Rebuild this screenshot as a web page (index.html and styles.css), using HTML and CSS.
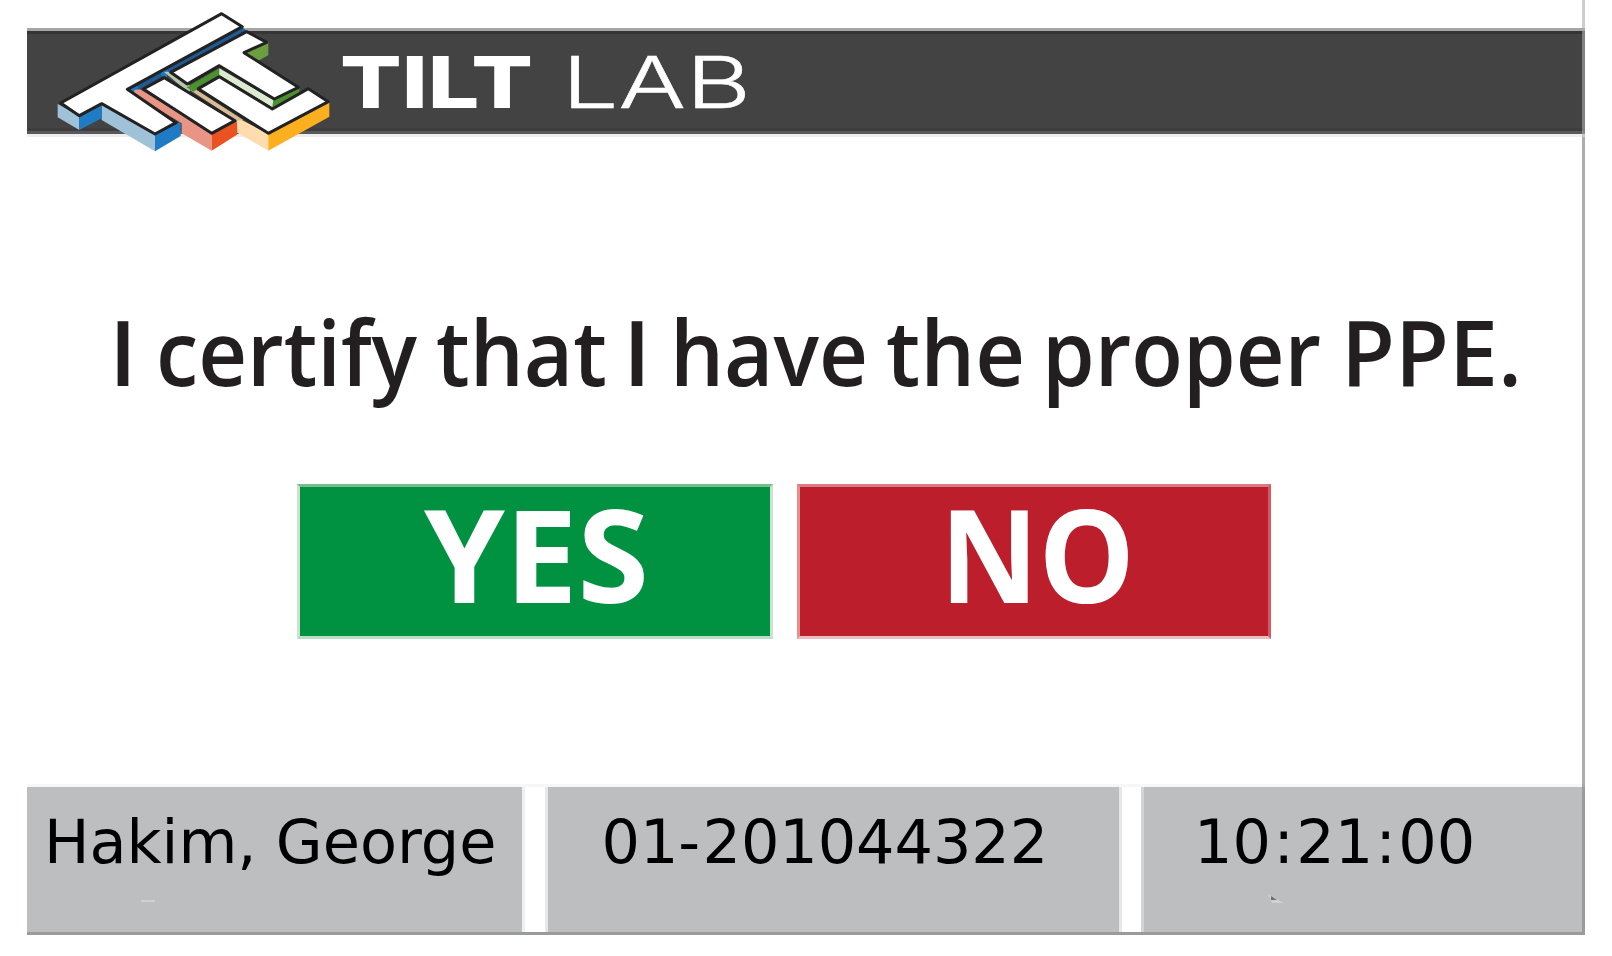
FILE: index.html
```html
<!DOCTYPE html>
<html lang="en">
<head>
<meta charset="utf-8">
<title>Tilt Lab</title>
<link rel="stylesheet" href="styles.css">
</head>
<body>
<div class="screen">
  <header class="header">
    <svg class="brand" width="760" height="160" viewBox="0 0 760 160">
      <g class="mark" transform="translate(13 0) scale(.33333)">
        <path fill="#9fc2d9" d="M53 312L118 348V390L53 352ZM185 310L345 402V454L185 360Z"/>
        <path fill="#1f7bc4" d="M118 348L185 312V355L118 390ZM345 402L422 366V408L345 454Z"/>
        <path fill="#1d5c96" d="M605 80L622 95L385 218L290 272L300 285L260 268Z"/>
        <path fill="#1f7bc4" d="M360 215L385 210L380 232L366 228ZM266 268L295 258L290 282Z"/>
        <path fill="#e99585" d="M284 270L300 268L515 400V452L425 400V370L280 282Z"/>
        <path fill="#ea5321" d="M515 402L591 362V404L515 452Z"/>
        <path fill="#b5c7ad" d="M372 216L390 215L455 260L447 278Z"/>
        <path fill="#ffdcae" d="M590 352L685 402V452L592 398Z"/>
        <path fill="#d8bd94" d="M450 270L470 270L610 360L590 362Z"/>
        <path fill="#fcaf1f" d="M685 402L868 306V350L685 452Z"/>
        <path fill="#6b9d41" d="M612 158L685 125V166L655 182Z"/>
        <path fill="#4c9130" d="M440 262L538 205L545 225L460 275ZM697 300L778 262V280L697 325Z"/>
        <path fill="#dcebcf" d="M538 205L700 300L697 322L538 225Z"/>
        <g class="faces">
          <path d="M62 309L545 41L607 80L262 268L408 368L345 402L185 311L118 347Z"/>
          <path d="M310 267L373 233L585 362L515 400Z"/>
          <path d="M392 217L620 95L680 127L612 158L775 262L703 297L538 197L442 252Z"/>
          <path d="M475 266L538 230L697 327L805 266L865 305L685 400Z"/>
        </g>
      </g>
      <text class="brand-bold" x="313" y="107.500" textLength="193" lengthAdjust="spacingAndGlyphs">TILT</text>
      <text class="brand-thin" y="107.500"><tspan x="535" textLength="189" lengthAdjust="spacingAndGlyphs">LAB</tspan></text>
    </svg>
  </header>
  <main class="main">
    <svg class="statement" width="1555" height="130" viewBox="0 0 1555 130">
      <text x="82" y="86" textLength="28" lengthAdjust="spacingAndGlyphs">I</text>
      <text x="129" y="86" textLength="261" lengthAdjust="spacingAndGlyphs">certify</text>
      <text x="409" y="86" textLength="171" lengthAdjust="spacingAndGlyphs">that</text>
      <text x="596" y="86" textLength="28" lengthAdjust="spacingAndGlyphs">I</text>
      <text x="643" y="86" textLength="198" lengthAdjust="spacingAndGlyphs">have</text>
      <text x="859" y="86" textLength="139" lengthAdjust="spacingAndGlyphs">the</text>
      <text x="1015" y="86" textLength="279" lengthAdjust="spacingAndGlyphs">proper</text>
      <text x="1314" y="86" textLength="181" lengthAdjust="spacingAndGlyphs">PPE.</text>
    </svg>
    <div class="answers">
      <button class="answer yes"><svg width="470" height="149" viewBox="0 0 470 149"><text x="124" y="116" textLength="225" lengthAdjust="spacingAndGlyphs">YES</text></svg></button>
      <button class="answer no"><svg width="468" height="149" viewBox="0 0 468 149"><text x="140" y="116" textLength="195" lengthAdjust="spacingAndGlyphs">NO</text></svg></button>
    </div>
  </main>
  <footer class="footer">
    <div class="cell name"><span>Hakim, George</span><i class="fleck"></i></div>
    <div class="cell badge"><span>01<b>-</b>201044322</span></div>
    <div class="cell time"><span>10<b>:</b>21<b>:</b>00</span>
      <svg class="chip" width="18" height="10" viewBox="0 0 18 10"><path fill="#d0d0d1" d="M0 0L16 9H4Z"/><path fill="#6e6e6e" d="M3 2L9 6H3Z"/></svg>
    </div>
  </footer>
</div>
</body>
</html>
```
FILE: styles.css
```css
* { box-sizing: border-box; }
body { margin: 0; background: #fff; overflow: hidden; }
.screen {
  display: grid;
  grid-template-rows: 137px 1fr 151px;
  width: 1558px;
  height: 935px;
  margin-left: 27px;
  border-right: 3px solid #adadad;
}
.header {
  margin-right: -3px;
  background: linear-gradient(#fff 28px, #a5a5a5 28px 31px, #353535 31px 34px, #434343 34px 128px, #3d3d3d 128px 131px, #595959 131px 134px, #eee 134px);
  border-right: 3px solid rgba(173, 173, 173, .6);
}
.brand { display: block; overflow: visible; }
.faces { fill: #fff; stroke: #222; stroke-width: 9; stroke-linejoin: round; }
.brand-bold { font: 800 72px Inter, sans-serif; fill: #fff; }
.brand-thin { font: 300 72px Inter, sans-serif; fill: #fff; stroke: #fff; stroke-width: .5; }
.main { padding-top: 163px; }
.statement { display: block; overflow: visible; font: 600 90px "Open Sans", sans-serif; fill: #231f20; }
.answers { display: flex; gap: 24px; margin: 54px 0 0 270px; }
.answer { padding: 0; border: 3px solid; height: 155px; overflow: visible; }
.answer svg { display: block; overflow: visible; font: 700 129px "Open Sans", sans-serif; fill: #fff; }
.yes { background: #009241; border-color: #75bd8c #cce2ce #b8dfc9; width: 476px; }
.no { background: #bc1e2c; border-color: #d97b80 #d25a60 #eabdc0 #df928e; width: 474px; }
.footer {
  display: grid;
  grid-template-columns: 498px 577px 444px;
  column-gap: 19.5px;
  border-bottom: 3px solid #9b9b9b;
  border-top: 3px solid rgba(0, 0, 0, .03);
  margin-right: -3px;
  font: 60.5px/70px "DejaVu Sans", Verdana, sans-serif;
  color: #000;
}
.cell { background: #bdbec0; padding-top: 20px; white-space: nowrap; }
.name { padding-left: 17px; border-right: 3px solid #f0f0f0; }
.badge { padding-left: 54px; border: 0 solid #e7e7e7; border-width: 0 3px; }
.time { padding-left: 50px; border-left: 3px solid #d3d3d4; border-right: 3px solid #9b9b9b; }
.cell b { font-weight: 400; margin: 0 2.4px; }
.badge b { margin: 0 2.5px 0 0; }
.badge span { letter-spacing: -.1px; }
.fleck { display: block; width: 14px; height: 2px; margin: 23px 0 0 97px; background: #d0d0d1; }
.chip { display: block; margin: 17px 0 0 74px; }
```
